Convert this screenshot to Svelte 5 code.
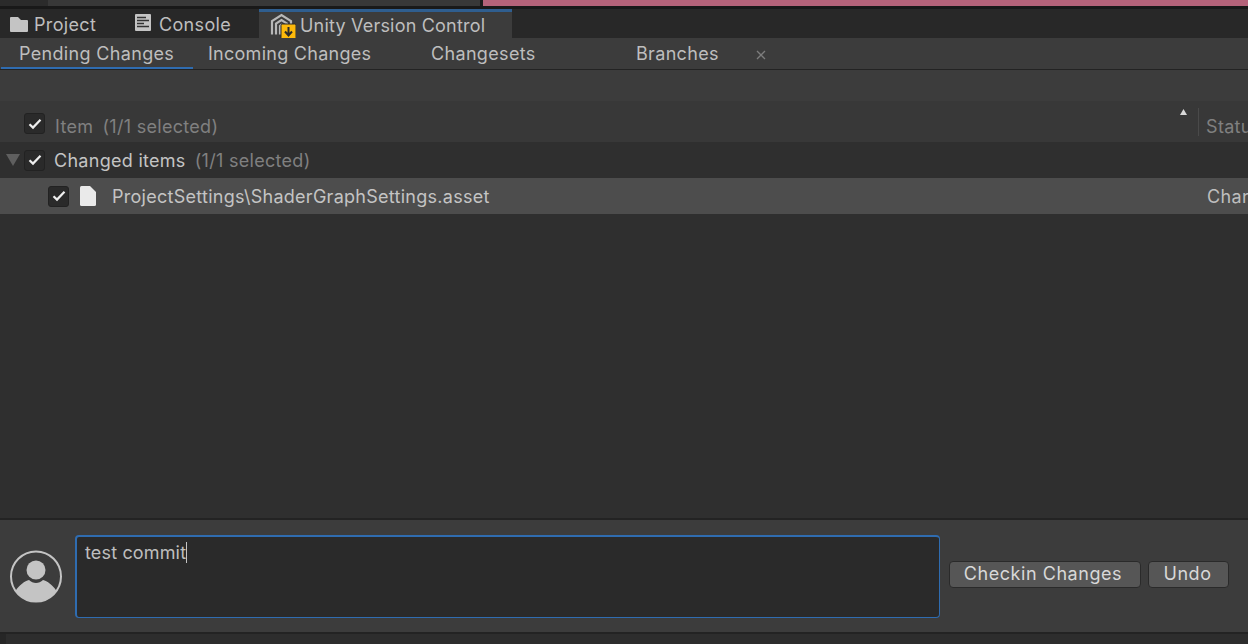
<script>
  const subtabs = [
    { label: 'Pending Changes', cls: 'st-pending' },
    { label: 'Incoming Changes', cls: 'st-incoming' },
    { label: 'Changesets', cls: 'st-changesets' },
    { label: 'Branches', cls: 'st-branches' }
  ];
</script>

{#snippet check()}
  <span class="check">
    <svg width="14" height="12" viewBox="0 0 14 12"><path d="M1.5 6.2 L5 9.6 L12.5 1.8" fill="none" stroke="#efefef" stroke-width="2.2"/></svg>
  </span>
{/snippet}

<div class="page">
  <div class="strip">
    <div class="s1"></div><div class="s2"></div><div class="s3"></div><div class="s4"></div>
  </div>
  <div class="tabbar">
    <div class="tab t-project">
      <svg width="18" height="15" viewBox="0 0 18 15"><path d="M0 1 Q0 0 1 0 H8 L11 3 H17 Q18 3 18 4 V14 Q18 15 17 15 H1 Q0 15 0 14 Z" fill="#c4c4c4"/></svg>
      <span>Project</span>
    </div>
    <div class="tab t-console">
      <svg width="16" height="17" viewBox="0 0 16 17"><rect width="16" height="17" rx="1" fill="#c4c4c4"/><path d="M2 3.5H11M2 6.5H14M2 9.5H9M2 12.5H14" stroke="#333" stroke-width="1.6"/></svg>
      <span>Console</span>
    </div>
    <div class="tab t-uvc">
      <svg class="uvc" width="26" height="27" viewBox="0 0 26 27">
        <path d="M2 21.5 V8 L11.5 2 L21 8 V11 M6 21.5 V10.5 L11.5 7 L17 10.5 V12 M10 21.5 V13 L12 11.5" fill="none" stroke="#b8b8b8" stroke-width="2.2"/>
        <rect x="11" y="11" width="15" height="15" rx="1.5" fill="#fdb90b" stroke="#2b2b2b" stroke-width="1"/>
        <path d="M18.5 14 V22 M15 18.5 L18.5 22.5 L22 18.5" fill="none" stroke="#2b2b2b" stroke-width="2"/>
      </svg>
      <span>Unity Version Control</span>
    </div>
  </div>
  <div class="subtabs">
    {#each subtabs as t}
      <div class="subtab {t.cls}">{t.label}</div>
    {/each}
    <svg class="close" width="10" height="10" viewBox="0 0 10 10"><path d="M1 1L9 9M9 1L1 9" stroke="#7d7d7d" stroke-width="1.3"/></svg>
  </div>
  <div class="toolbar"></div>
  <div class="header">
    <div class="h-check">{@render check()}</div>
    <span class="h-item">Item</span>
    <span class="h-sel">(1/1 selected)</span>
    <div class="spacer"></div>
    <svg class="sort" width="7" height="6" viewBox="0 0 7 6"><path d="M3.5 0L7 6H0Z" fill="#d8d8d8"/></svg>
    <div class="divider"></div>
    <span class="h-status">Status</span>
  </div>
  <div class="group">
    <svg class="tri" width="14" height="12" viewBox="0 0 14 12"><path d="M0 0H14L7 12Z" fill="#5f5f5f"/></svg>
    {@render check()}
    <span class="g-name">Changed items</span>
    <span class="g-sel">(1/1 selected)</span>
  </div>
  <div class="row">
    {@render check()}
    <svg class="file" width="16" height="20" viewBox="0 0 16 20"><path d="M1.5 0H10L16 6V18.5Q16 20 14.5 20H1.5Q0 20 0 18.5V1.5Q0 0 1.5 0Z" fill="#eaeaea"/></svg>
    <span class="r-name">ProjectSettings\ShaderGraphSettings.asset</span>
    <div class="spacer"></div>
    <span class="r-status">Changed</span>
  </div>
  <div class="list"></div>
  <div class="commit">
    <svg class="avatar" width="52" height="53" viewBox="0 0 52 53">
      <circle cx="26" cy="26.5" r="25" fill="none" stroke="#c4c4c4" stroke-width="2"/>
      <circle cx="26" cy="20" r="9.5" fill="#c4c4c4"/>
      <path d="M5.5 41 C9 35 15 31 19 30 C23 34 29 34 33 30 C37 31 43 35 46.5 41 C41 48 34 52 26 52 C18 52 11 48 5.5 41Z" fill="#c4c4c4"/>
    </svg>
    <div class="input"><span>test commit</span><i class="caret"></i></div>
    <button class="btn b-checkin">Checkin Changes</button>
    <button class="btn b-undo">Undo</button>
  </div>
  <div class="bottom"><div class="b1"></div></div>
</div>

<style>
  :global(body) { margin: 0; background: #2f2f2f; }
  .page { width: 1248px; height: 644px; overflow: hidden; display: flex; flex-direction: column; font-family: Inter, "Noto Sans", sans-serif; font-size: 18px; color: #bebebe; letter-spacing: 0.33px; }
  .strip { height: 6px; display: flex; }
  .s1 { width: 48px; background: #2b2b2b; }
  .s2 { width: 432px; background: #383838; }
  .s3 { width: 3px; background: #1c1c1c; }
  .s4 { flex: 1; background: #b5637a; }
  .tabbar { height: 32px; display: flex; background: linear-gradient(#191919 0 3px, #282828 3px); flex-shrink: 0; }
  .tab { display: flex; align-items: center; height: 29px; margin-top: 3px; flex-shrink: 0; }
  .tab span { position: relative; top: 1px; }
  .t-project { width: 125px; padding-left: 10px; gap: 6px; box-sizing: border-box; }
  .t-project svg { margin-top: 1px; }
  .t-console { width: 134px; padding-left: 10px; gap: 7px; box-sizing: border-box; }
  .t-console svg { margin-top: -3px; }
  .t-console span { left: 1px; }
  .t-uvc { width: 253px; border-top: 3px solid #2f5e8f; background: #3c3c3c; padding-left: 11px; box-sizing: border-box; letter-spacing: 0.2px; }
  .t-uvc span { top: 0; }
  .uvc { margin-top: 2px; margin-right: 4px; flex-shrink: 0; }
  .subtabs { height: 31px; position: relative; display: flex; background: #3c3c3c; border-bottom: 1px solid #232323; flex-shrink: 0; align-items: stretch; }
  .subtab { display: flex; align-items: center; height: 31px; box-sizing: border-box; flex-shrink: 0; }
  .st-pending { margin-left: 1px; width: 192px; padding-left: 18px; border-bottom: 2px solid #2f6cb0; padding-top: 2px; }
  .st-incoming { padding-left: 15px; width: 238px; letter-spacing: 0.27px; }
  .st-changesets { width: 205px; }
  .st-branches { width: 120px; }
  .close { align-self: center; margin-top: 3px; }
  .toolbar { height: 31px; background: #3c3c3c; flex-shrink: 0; }
  .header { height: 41px; background: #383838; display: flex; align-items: center; flex-shrink: 0; color: #808080; box-sizing: border-box; padding-top: 9px; }
  .h-check { margin-left: 24px; display: flex; margin-top: -5px; }
  .h-item { margin-left: 10px; }
  .h-sel { margin-left: 9px; letter-spacing: 0.3px; }
  .spacer { flex: 1; }
  .sort { align-self: flex-start; margin-top: -1px; margin-right: 11px; }
  .divider { width: 1px; height: 28px; background: #4a4a4a; margin-top: -9px; align-self: center; margin-right: 7px; }
  .h-status { width: 42px; white-space: nowrap; }
  .check { width: 21px; height: 21px; box-sizing: border-box; background: #2a2a2a; border: 1px solid #222; border-radius: 3px; display: inline-flex; align-items: center; justify-content: center; flex-shrink: 0; }
  .group { height: 36px; background: #2f2f2f; display: flex; align-items: center; flex-shrink: 0; }
  .tri { margin-left: 6px; margin-right: 4px; }
  .g-name { margin-left: 9px; color: #c4c4c4; letter-spacing: 0.28px; }
  .g-sel { margin-left: 9px; color: #808080; letter-spacing: 0.3px; }
  .row { height: 36px; background: #4d4d4d; display: flex; align-items: center; padding-left: 48px; flex-shrink: 0; }
  .file { margin-left: 11px; }
  .r-name { margin-left: 16px; color: #c4c4c4; white-space: nowrap; letter-spacing: 0.27px; }
  .r-status { width: 41px; white-space: nowrap; }
  .list { height: 304px; background: #2f2f2f; border-bottom: 2px solid #232323; flex-shrink: 0; }
  .commit { height: 112px; background: #3c3c3c; display: flex; align-items: center; flex-shrink: 0; }
  .avatar { margin-left: 10px; margin-top: 1px; flex-shrink: 0; }
  .input { width: 865px; height: 83px; margin-left: 13px; box-sizing: border-box; background: #2a2a2a; border: solid #2f6cb0; border-width: 2px 1px 1px 2px; border-radius: 4px; padding: 5px 9px 5px 8px; display: flex; align-items: flex-start; line-height: 22px; margin-top: 1px; letter-spacing: 0.15px; }
  .caret { width: 1px; height: 21px; background: #c4c4c4; display: block; }
  .btn { height: 27px; box-sizing: border-box; background: #565656; border: 1px solid #2a2a2a; border-radius: 4px; font: inherit; letter-spacing: 0.55px; color: #d8d8d8; margin-top: -4px; display: block; padding: 0 2px 2px 0; }
  .b-checkin { width: 192px; margin-left: 9px; padding-right: 4px; }
  .b-undo { width: 81px; margin-left: 7px; }
  .bottom { flex: 1; background: #262626; border-top: 2px solid #232323; padding-left: 6px; display: flex; }
  .b1 { flex: 1; background: #2d2d2d; }
</style>
